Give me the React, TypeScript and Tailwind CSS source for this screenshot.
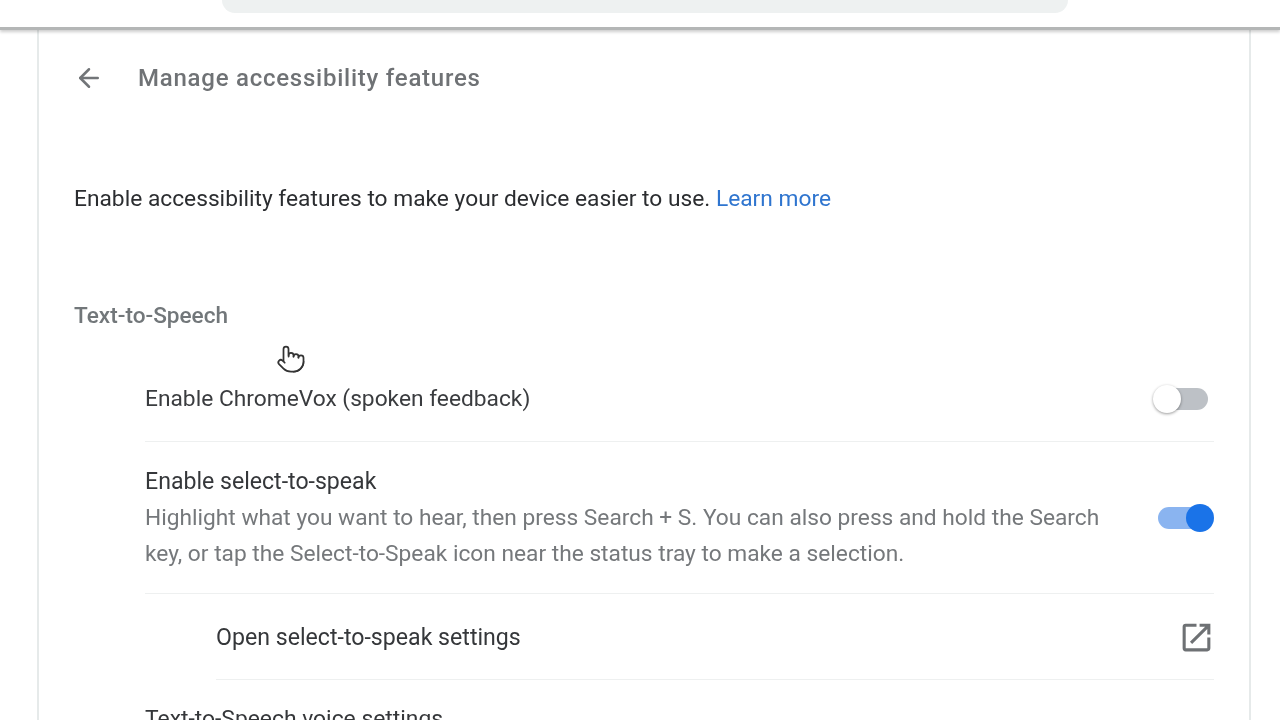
import React from 'react';
import { ArrowLeft, Pointer } from 'lucide-react';

const font = "font-['Roboto',sans-serif]";

const Toggle: React.FC<{ on?: boolean }> = ({ on }) => (
  <div className="relative h-[22px] w-[56px] flex items-center">
    {on ? (
      <>
        <div className="h-[22px] w-[55px] rounded-full bg-[#8ab4f0]" />
        <div className="absolute right-0 top-[-3px] h-[28px] w-[28px] rounded-full bg-[#1a73e8]" />
      </>
    ) : (
      <>
        <div className="ml-[2px] h-[22px] w-[53px] rounded-full bg-[#bdc1c6]" />
        <div className="absolute left-0 top-[-3px] h-[28px] w-[28px] rounded-full bg-white shadow-[0_1px_3px_rgba(0,0,0,0.4)]" />
      </>
    )}
  </div>
);

const App: React.FC = () => {
  return (
    <div className={`relative h-screen w-full overflow-hidden bg-white blur-[0.5px] ${font}`}>
      {/* Top bar */}
      <div className="h-[30px] border-b-[3px] border-[#b4b6b6] shadow-[0_2px_3px_rgba(0,0,0,0.2)] relative z-10 bg-white">
        <div className="ml-[222px] h-[13px] w-[846px] rounded-b-[20px] bg-[#eef1f1]" />
      </div>

      {/* Card */}
      <div className="ml-[37px] w-[1214px] h-[700px] border-x-2 border-[#e6eaea]">
        <div className="flex items-center h-[95px] pl-[35px] text-[#6f7275]">
          <ArrowLeft size={30} strokeWidth={2} className="text-[#727578]" />
          <h1 className="ml-[34px] text-[24px] font-medium tracking-[0.76px]">Manage accessibility features</h1>
        </div>

        <p className="mt-[58px] ml-[35px] text-[22.75px] leading-[32px] text-[#2b2d30]">
          Enable accessibility features to make your device easier to use.{' '}
          <span className="text-[#2f75cf]">Learn more</span>
        </p>

        <h2 className="mt-[85px] ml-[35px] text-[22.6px] leading-[32px] font-medium text-[#72777a]">Text-to-Speech</h2>

        <div className="ml-[106px] mr-[35px]">
          <div className="flex items-center justify-between h-[90px] mt-[20px] border-b border-[#eef0f0]">
            <span className="text-[22.75px] text-[#3a3c3f] mt-[5px]">Enable ChromeVox (spoken feedback)</span>
            <div className="mr-[5px] mt-[5px]"><Toggle /></div>
          </div>

          <div className="flex items-center justify-between h-[152px] border-b border-[#eef0f0]">
            <div className="w-[975px] text-[22.72px] leading-[36px] mt-[1px]">
              <div className="text-[23.1px] text-[#35373a]">Enable select-to-speak</div>
              <div className="text-[#75787b]">
                Highlight what you want to hear, then press Search + S. You can also press and hold the Search key, or tap the Select-to-Speak icon near the status tray to make a selection.
              </div>
            </div>
            <div className="mt-[1px]"><Toggle on /></div>
          </div>

          <div className="ml-[71px] flex items-center justify-between h-[86px] border-b border-[#eef0f0]">
            <span className="text-[23.15px] text-[#35373a] mt-[4px]">Open select-to-speak settings</span>
            <svg width="37" height="37" viewBox="0 0 24 24" className="mr-[-1px] mt-[2px] text-[#6e7174]" fill="currentColor">
              <path d="M19 19H5V5h7V3H5a2 2 0 0 0-2 2v14a2 2 0 0 0 2 2h14c1.1 0 2-.9 2-2v-7h-2v7zM14 3v2h3.59l-9.83 9.83 1.41 1.41L19 6.41V10h2V3h-7z" />
            </svg>
          </div>

          <div className="pt-[21px] text-[22.85px] leading-[36px] text-[#35373a]">Text-to-Speech voice settings</div>
        </div>
      </div>

      {/* Cursor */}
      <Pointer size={30} strokeWidth={1.4} className="absolute left-[276px] top-[344px] text-[#333] fill-white" />
    </div>
  );
};

export default App;
